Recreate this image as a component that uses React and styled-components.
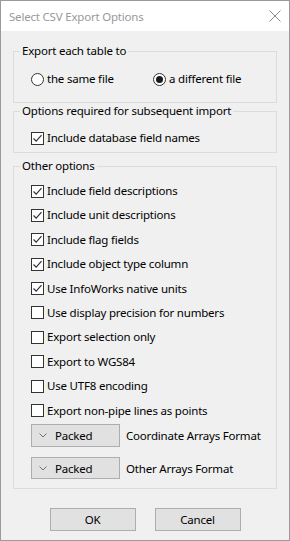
import React from 'react'
import styled, { createGlobalStyle } from 'styled-components'

const Global = createGlobalStyle`
  html, body {
    margin: 0;
    padding: 0;
    background: #f0f0f0;
  }
  * { box-sizing: border-box; }
`;

const Window = styled.div`
  width: 290px;
  height: 541px;
  border: 1px solid #9a9a9a;
  background: #f0f0f0;
  display: flex;
  flex-direction: column;
  font-family: "Noto Sans", "Open Sans", sans-serif;
  font-size: 11.5px;
  letter-spacing: -0.2px;
  color: #000;
`;

const TitleBar = styled.div`
  height: 30px;
  background: #fff;
  display: flex;
  align-items: center;
  justify-content: space-between;
  padding: 0 8px 0 8px;
  flex-shrink: 0;
`;

const Title = styled.span`
  color: #999;
`;

const Body = styled.div`
  flex: 1;
  padding: 12px 12px 0 12px;
  display: flex;
  flex-direction: column;
`;

const Group = styled.fieldset`
  margin: ${p => p.$top || 0}px 0 0 0;
  padding: ${p => p.$pad};
  border: 1px solid #dcdcdc;
  min-width: 0;
  display: flex;
  flex-direction: column;
  gap: ${p => p.$gap || 0}px;
`;

const Legend = styled.legend`
  margin-left: 6px;
  padding: 0 2px;
  line-height: 16px;
`;

const RadioRow = styled.div`
  display: flex;
  padding-left: 17px;
`;

const Option = styled.label`
  display: flex;
  align-items: center;
  gap: 3px;
  height: 16px;
  line-height: 16px;
  white-space: nowrap;
  width: ${p => p.$w || 'auto'};
  padding-left: ${p => p.$indent || 0}px;
`;

const Box = styled.span`
  width: 13px;
  height: 13px;
  border: 1px solid #333;
  background: #fff;
  display: flex;
  align-items: center;
  justify-content: center;
  flex-shrink: 0;
`;

const Circle = styled.span`
  width: 13px;
  height: 13px;
  border: 1px solid #333;
  border-radius: 50%;
  background: #fff;
  display: flex;
  align-items: center;
  justify-content: center;
  flex-shrink: 0;
`;

const Dot = styled.span`
  width: 7px;
  height: 7px;
  border-radius: 50%;
  background: #1a1a1a;
`;

const ComboRow = styled.div`
  display: flex;
  align-items: center;
  gap: 6px;
  padding-left: 17px;
  margin-top: ${p => p.$top}px;
`;

const Combo = styled.div`
  width: 89px;
  height: ${p => p.$h || 23}px;
  background: #e1e1e1;
  border: 1px solid #adadad;
  display: flex;
  align-items: center;
  padding-left: 7px;
  gap: 8px;
`;

const Buttons = styled.div`
  display: flex;
  justify-content: center;
  gap: 19px;
  margin-top: 19px;
`;

const Button = styled.button`
  width: 86px;
  height: 23px;
  background: #e1e1e1;
  border: 1px solid #adadad;
  font-family: inherit;
  font-size: inherit;
  letter-spacing: inherit;
  color: #000;
  padding: 0;
`;

const Check = () => (
  <svg width="11" height="11" viewBox="0 0 11 11">
    <path d="M1.5 5.5 L4.2 8.2 L9.5 2.2" fill="none" stroke="#333" strokeWidth="1.2" />
  </svg>
);

const Chevron = () => (
  <svg width="8" height="5" viewBox="0 0 8 5">
    <path d="M0.5 0.5 L4 4 L7.5 0.5" fill="none" stroke="#707070" strokeWidth="1" />
  </svg>
);

const CheckItem = ({ checked, children }) => (
  <Option $indent={17}>
    <Box>{checked && <Check />}</Box>
    {children}
  </Option>
);

const others = [
  ['Include field descriptions', true],
  ['Include unit descriptions', true],
  ['Include flag fields', true],
  ['Include object type column', true],
  ['Use InfoWorks native units', true],
  ['Use display precision for numbers', false],
  ['Export selection only', false],
  ['Export to WGS84', false],
  ['Use UTF8 encoding', false],
  ['Export non-pipe lines as points', false],
];

export default function App() {
  return (
    <Window>
      <Global />
      <TitleBar>
        <Title>Select CSV Export Options</Title>
        <svg width="12" height="12" viewBox="0 0 12 12">
          <path d="M0.5 0.5 L11.5 11.5 M11.5 0.5 L0.5 11.5" stroke="#8a8a8a" strokeWidth="1" />
        </svg>
      </TitleBar>
      <Body>
        <Group $pad="12px 0 15px 0">
          <Legend>Export each table to</Legend>
          <RadioRow>
            <Option $w="122px">
              <Circle />
              the same file
            </Option>
            <Option>
              <Circle><Dot /></Circle>
              a different file
            </Option>
          </RadioRow>
        </Group>
        <Group $pad="11px 0 6px 0">
          <Legend>Options required for subsequent import</Legend>
          <CheckItem checked>Include database field names</CheckItem>
        </Group>
        <Group $top={5} $pad="9px 0 9px 0" $gap={8.4}>
          <Legend>Other options</Legend>
          {others.map(([label, on]) => (
            <CheckItem key={label} checked={on}>{label}</CheckItem>
          ))}
          <ComboRow $top={-3}>
            <Combo><Chevron />Packed</Combo>
            Coordinate Arrays Format
          </ComboRow>
          <ComboRow $top={2}>
            <Combo $h={22}><Chevron />Packed</Combo>
            Other Arrays Format
          </ComboRow>
        </Group>
        <Buttons>
          <Button>OK</Button>
          <Button>Cancel</Button>
        </Buttons>
      </Body>
    </Window>
  )
}
